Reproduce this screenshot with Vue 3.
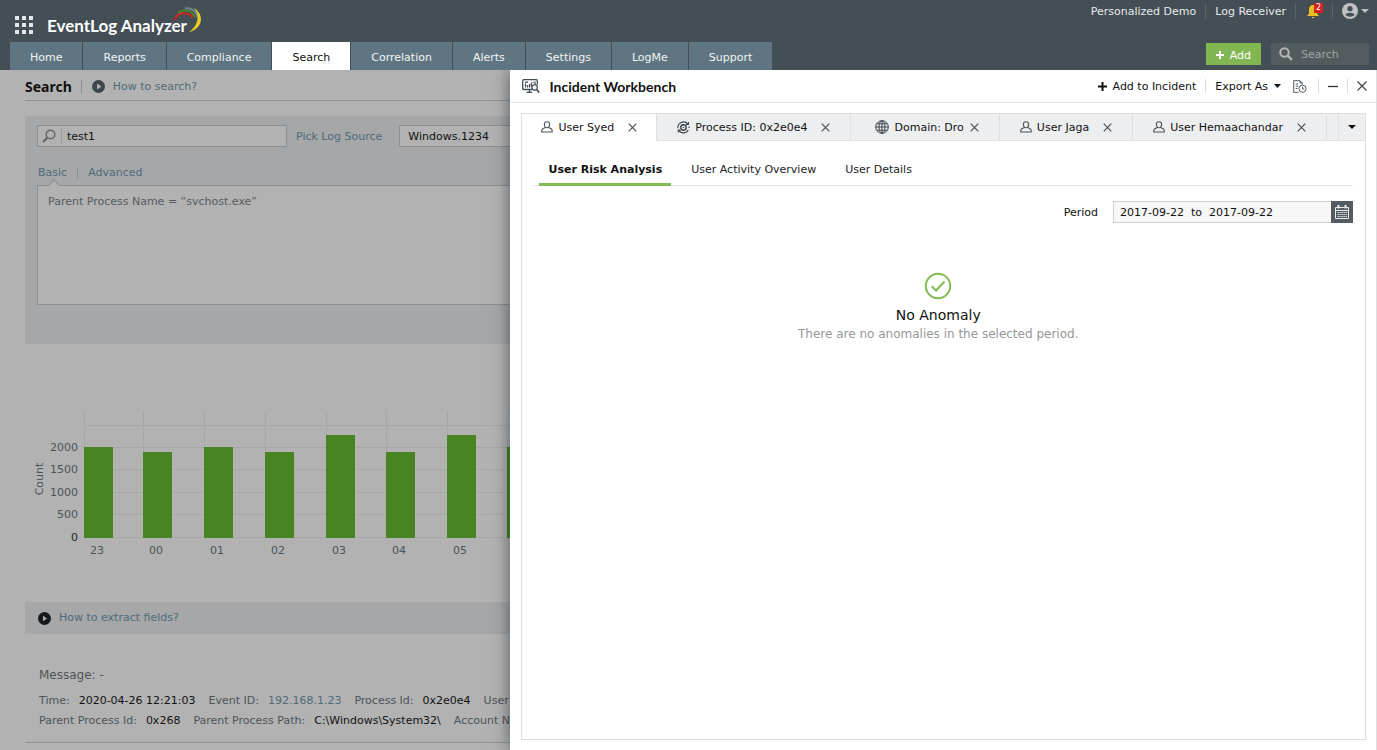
<script setup>
import { ref } from 'vue'

const navItems = ['Home', 'Reports', 'Compliance', 'Search', 'Correlation', 'Alerts', 'Settings', 'LogMe', 'Support']
const activeNav = ref('Search')

const tabs = [
  { icon: 'user', label: 'User Syed' },
  { icon: 'process', label: 'Process ID: 0x2e0e4' },
  { icon: 'globe', label: 'Domain: Dro', tight: true },
  { icon: 'user', label: 'User Jaga' },
  { icon: 'user', label: 'User Hemaachandar' },
]
const activeTab = ref('User Syed')

const views = ['User Risk Analysis', 'User Activity Overview', 'User Details']
const activeView = ref('User Risk Analysis')

const logName = ref('test1')
const source = ref('Windows.1234')
const query = ref('')
const period = ref('2017-09-22  to  2017-09-22')

const bars = [
  { x: 50, top: 37, label: '23' },
  { x: 109, top: 42, label: '00' },
  { x: 170, top: 37, label: '01' },
  { x: 231, top: 42, label: '02' },
  { x: 292, top: 25, label: '03' },
  { x: 352, top: 42, label: '04' },
  { x: 413, top: 25, label: '05' },
  { x: 473, top: 37, label: '06' },
]
const ticks = [
  { y: 38, label: '2000' },
  { y: 60, label: '1500' },
  { y: 83, label: '1000' },
  { y: 105, label: '500' },
  { y: 128, label: '0' },
]

const rows = [
  [
    { k: 'Time:', v: '2020-04-26 12:21:03' },
    { k: 'Event ID:', v: '192.168.1.23', link: true },
    { k: 'Process Id:', v: '0x2e0e4' },
    { k: 'User Name:', v: '-' },
  ],
  [
    { k: 'Parent Process Id:', v: '0x268' },
    { k: 'Parent Process Path:', v: 'C:\\Windows\\System32\\' },
    { k: 'Account Name:', v: '-' },
  ],
]
</script>

<template>
  <div class="page">
    <header class="top">
      <div class="top-row">
        <div class="brand">
          <button class="apps" aria-label="Applications">
            <svg width="19" height="19" viewBox="0 0 19 19" fill="#e4e6e7">
              <template v-for="r in 3" :key="r">
                <rect v-for="c in 3" :key="c" :x="(c - 1) * 7" :y="(r - 1) * 7" width="4" height="4" />
              </template>
            </svg>
          </button>
          <span class="brand-name">EventLog Analyzer</span>
          <svg class="swoosh" width="30" height="28" viewBox="0 0 30 28" fill="none">
            <path d="M2 14C4 6 13 5 20 11" stroke="#d8201c" stroke-width="1.800" />
            <path d="M5 7C11 2.500 18 4 22 11" stroke="#4a8a2a" stroke-width="1.800" />
            <path d="M12 2.500C18 1 23 5 25 12" stroke="#6c8796" stroke-width="2" />
            <path d="M21 2C31 8 31 22 16 26.500C24 20 28 11 21 2Z" fill="#e8cb22" />
          </svg>
        </div>
        <div class="links">
          <a href="#">Personalized Demo</a>
          <i class="bar"></i>
          <a href="#">Log Receiver</a>
          <i class="bar"></i>
          <button class="bell" aria-label="Notifications">
            <svg width="14" height="15" viewBox="0 0 14 15" fill="#e9bf22">
              <path d="M7 1C4 1 3 3.500 3 6V9.500L1 12H13L11 9.500V6C11 3.500 10 1 7 1ZM5.500 13H8.500C8 14.700 6 14.700 5.500 13Z" />
            </svg>
            <span class="badge">2</span>
          </button>
          <i class="bar"></i>
          <button class="account" aria-label="Account">
            <svg width="16" height="16" viewBox="0 0 17 17">
              <circle cx="8.500" cy="8.500" r="8.500" fill="#bfc1c2" />
              <circle cx="8.500" cy="6" r="2.800" fill="#434e55" />
              <path d="M3.500 12.500C4.500 9.500 12.500 9.500 13.500 12.500C11 15.200 6 15.200 3.500 12.500Z" fill="#434e55" />
            </svg>
            <svg width="8" height="4" viewBox="0 0 8 4" fill="#bfc1c2"><path d="M0 0H8L4 4Z" /></svg>
          </button>
        </div>
      </div>
      <div class="top-row second">
        <nav class="nav">
          <a v-for="n in navItems" :key="n" href="#" :class="{ on: n === activeNav }" @click.prevent="activeNav = n">{{ n }}</a>
        </nav>
        <div class="actions">
          <button class="add">
            <svg width="8" height="8" viewBox="0 0 8 8" stroke="#fff" stroke-width="2"><path d="M4 0V8M0 4H8" /></svg>
            <span>Add</span>
          </button>
          <label class="find">
            <svg width="14" height="14" viewBox="0 0 14 14" fill="none" stroke="#b4b6b7">
              <circle cx="5.500" cy="5.500" r="4.200" stroke-width="2" /><path d="M8.700 8.700L13 13" stroke-width="2.400" />
            </svg>
            <input type="text" placeholder="Search" aria-label="Search" />
          </label>
        </div>
      </div>
    </header>

    <main class="main">
      <div class="heading">
        <h1>Search</h1>
        <i class="sep"></i>
        <svg width="13" height="13" viewBox="0 0 13 13"><circle cx="6.500" cy="6.500" r="6.500" fill="#3c474d" /><path d="M5 3.500L9.500 6.500L5 9.500Z" fill="#b2b2b2" /></svg>
        <a href="#">How to search?</a>
      </div>

      <section class="box">
        <div class="box-row">
          <label class="field name">
            <svg width="14" height="14" viewBox="0 0 14 14" fill="none" stroke="#62686b">
              <circle cx="8.500" cy="5.500" r="4.300" stroke-width="1.600" /><path d="M5.400 8.600L1 13" stroke-width="2.200" />
            </svg>
            <i class="sep"></i>
            <input v-model="logName" type="text" aria-label="Log type" />
          </label>
          <a href="#" class="pick">Pick Log Source</a>
          <label class="field source"><input v-model="source" type="text" aria-label="Log source" /></label>
        </div>
        <div class="modes">
          <a href="#" class="basic">Basic</a>
          <i class="sep"></i>
          <a href="#">Advanced</a>
        </div>
        <textarea v-model="query" aria-label="Query" placeholder="Parent Process Name = “svchost.exe”"></textarea>
      </section>

      <svg class="chart" width="520" height="150" viewBox="0 0 520 150" role="img" aria-label="Count per hour">
        <g stroke="#a6a7a8" stroke-width="1">
          <path v-for="b in bars" :key="b.x" :d="`M${b.x + 0.5} 1V128`" />
          <path d="M50 15.500H520" />
          <path v-for="t in ticks" :key="t.y" :d="`M50 ${t.y - 0.5}H520`" />
        </g>
        <rect v-for="b in bars" :key="b.label" :x="b.x" :y="b.top" width="29" :height="128 - b.top" fill="#498423" />
        <g class="axis" text-anchor="end">
          <text v-for="t in ticks" :key="t.label" x="44" :y="t.y + 3" :class="{ zero: t.label === '0' }">{{ t.label }}</text>
        </g>
        <g class="axis" text-anchor="middle">
          <text v-for="b in bars" :key="b.label" :x="b.x + 13" y="144">{{ b.label }}</text>
          <text transform="translate(9 69) rotate(-90)">Count</text>
        </g>
      </svg>

      <div class="extract">
        <svg width="13" height="13" viewBox="0 0 13 13"><circle cx="6.500" cy="6.500" r="6.500" fill="#15191b" /><path d="M5 3.800L9 6.500L5 9.200Z" fill="#b2b2b2" /></svg>
        <a href="#">How to extract fields?</a>
      </div>

      <section class="event">
        <p class="message">Message: -</p>
        <dl v-for="(row, i) in rows" :key="i">
          <div v-for="p in row" :key="p.k">
            <dt>{{ p.k }}</dt>
            <dd><a v-if="p.link" href="#">{{ p.v }}</a><template v-else>{{ p.v }}</template></dd>
          </div>
        </dl>
      </section>
    </main>

    <aside class="bench" aria-label="Incident Workbench">
      <div class="bench-head">
        <svg width="18" height="15" viewBox="0 0 18 15" fill="none" stroke="#434e55">
          <path d="M10 10.500H1.500Q.7 10.500 .7 9.500V1.700Q.7 .7 1.700 .7H14.300Q15.300 .7 15.300 1.700V5.500" stroke-width="1.300" />
          <path d="M3.500 8.500V4.500M5.500 8.500V6M7.500 8.500V5M9.300 8V3.500M3 3.200H6M11 4V3M13 5V2.500" stroke-width="1.200" />
          <path d="M4.500 13.300H10M7.500 10.500V13" stroke-width="1.300" />
          <circle cx="12.600" cy="8.400" r="2.700" stroke-width="1.200" /><path d="M14.600 10.500L17.300 13.600" stroke-width="1.600" />
        </svg>
        <h2>Incident Workbench</h2>
        <button class="act">
          <svg width="9" height="9" viewBox="0 0 9 9" stroke="#111" stroke-width="2"><path d="M4.500 0V9M0 4.500H9" /></svg>
          <span>Add to Incident</span>
        </button>
        <i class="sep"></i>
        <button class="act export">
          <span>Export As</span>
          <svg width="7" height="4" viewBox="0 0 7 4" fill="#111"><path d="M0 0H7L3.500 4Z" /></svg>
        </button>
        <button class="act report" aria-label="Schedule report">
          <svg width="14" height="13" viewBox="0 0 14 13" fill="none" stroke="#555d62">
            <path d="M5.500 12.300H.7V.7H7L9.300 3V4.500M7 .7V3H9.300M2.700 4H5M2.700 6.200H5M2.700 8.500H4.500" /><circle cx="9.500" cy="8.700" r="3.600" /><path d="M9.500 6.700V9H11.400" />
          </svg>
        </button>
        <i class="sep"></i>
        <button class="act" aria-label="Minimize">
          <svg width="10" height="10" viewBox="0 0 10 10" stroke="#333" stroke-width="1.300"><path d="M0 5.500H10" /></svg>
        </button>
        <i class="sep"></i>
        <button class="act" aria-label="Close">
          <svg width="10" height="10" viewBox="0 0 10 10" stroke="#444" stroke-width="1.200"><path d="M.5 .5L9.500 9.500M9.500 .5L.5 9.500" /></svg>
        </button>
      </div>

      <div class="card">
        <div class="tabs">
          <div v-for="t in tabs" :key="t.label" class="tab" :class="{ on: t.label === activeTab, tight: t.tight }">
            <button class="tab-name" @click="activeTab = t.label">
              <svg v-if="t.icon === 'user'" width="12" height="12" viewBox="0 0 12 12" fill="none" stroke="#4a5358" stroke-width="1.100">
                <path d="M6 .7C3.900 .7 3.300 2.200 3.400 3.500C3.500 5.200 4.500 6.700 6 6.700C7.500 6.700 8.500 5.200 8.600 3.500C8.700 2.200 8.100 .7 6 .7ZM4.400 6.500L1.800 7.800Q.7 8.500 .7 11H11.300Q11.300 8.500 10.200 7.800L7.600 6.500" />
              </svg>
              <svg v-else-if="t.icon === 'process'" width="13" height="13" viewBox="0 0 13 13" fill="none" stroke="#3c464c" stroke-width="1.100">
                <path d="M11.300 9A5.500 5.500 0 0 1 1.700 9.200M.9 7.200A5.600 5.600 0 0 1 10.800 3M12.100 5.500V7M11.500 .9V3.400H9M1.300 11.500V9H3.800" />
                <circle cx="6.500" cy="6.500" r="2.700" stroke-width="1.400" /><circle cx="6.500" cy="6.500" r=".7" fill="#3c464c" stroke="none" />
              </svg>
              <svg v-else width="14" height="14" viewBox="0 0 14 14" fill="none" stroke="#3c464c">
                <circle cx="7" cy="7" r="6.300" /><ellipse cx="7" cy="7" rx="3" ry="6.300" /><path d="M7 .7V13.300M.7 7H13.300M1.700 3.800H12.300M1.700 10.200H12.300" />
              </svg>
              <span>{{ t.label }}</span>
            </button>
            <button class="x" :aria-label="`Close ${t.label}`">
              <svg width="9" height="9" viewBox="0 0 9 9" stroke="#444b50" stroke-width="1.100"><path d="M.7 .7L8.300 8.300M8.300 .7L.7 8.300" /></svg>
            </button>
          </div>
          <div class="rest"></div>
          <button class="more" aria-label="More tabs">
            <svg width="8" height="4" viewBox="0 0 8 4" fill="#111"><path d="M0 0H8L4 4Z" /></svg>
          </button>
        </div>

        <nav class="views">
          <a v-for="v in views" :key="v" href="#" :class="{ on: v === activeView }" @click.prevent="activeView = v">{{ v }}</a>
        </nav>

        <div class="period">
          <label for="period">Period</label>
          <input id="period" v-model="period" type="text" />
          <button aria-label="Open calendar">
            <svg width="14" height="14" viewBox="0 0 14 14" fill="none" stroke="#e9ebec">
              <path d="M.5 2.500H13.500V13.500H.5ZM.5 5.500H13.500" /><path d="M3.500 0V3.500M10.500 0V3.500" stroke-width="2" /><path d="M2.500 7.500H12M2.500 9.500H12M2.500 11.500H12" stroke-dasharray="1.300 .7" />
            </svg>
          </button>
        </div>

        <div class="empty">
          <svg width="28" height="28" viewBox="0 0 28 28" fill="none" stroke="#7fba52" stroke-width="2">
            <circle cx="14" cy="14" r="12.200" /><path d="M7.800 14.300L12 18.500L20.500 9.500" />
          </svg>
          <h3>No Anomaly</h3>
          <p>There are no anomalies in the selected period.</p>
        </div>
      </div>
    </aside>
  </div>
</template>

<style>
body {
  margin: 0;
}
</style>

<style scoped>
.page {
  position: relative;
  display: flex;
  flex-direction: column;
  min-height: 100vh;
  overflow: hidden;
  background: #b2b2b2;
  color: #111;
  font: 11px/16px "DejaVu Sans", Verdana, sans-serif;
}
.page * {
  box-sizing: border-box;
}
svg {
  display: block;
  flex: none;
}
a {
  color: #4f6b79;
  text-decoration: none;
}
button {
  display: flex;
  align-items: center;
  margin: 0;
  padding: 0;
  border: 0;
  background: none;
  color: inherit;
  font: inherit;
  white-space: nowrap;
}
button > span {
  padding-top: 2px;
}
input,
textarea {
  min-width: 0;
  margin: 0;
  padding: 0;
  border: 0;
  outline: 0;
  background: none;
  color: #111;
  font: inherit;
}
h1,
h2,
h3,
p,
dl,
dd {
  margin: 0;
}
.sep {
  flex: none;
  width: 1px;
  height: 14px;
  background: #d9dcdd;
}

/* Top bar */
.top {
  position: relative;
  z-index: 2;
  background: #434e55;
}
.top-row {
  display: flex;
  justify-content: space-between;
  height: 42px;
}
.top-row.second {
  height: 28px;
  padding-left: 10px;
}
.brand {
  display: flex;
  align-items: flex-end;
  padding: 0 0 7px 15px;
}
.brand-name {
  margin-left: 13px;
  color: #fff;
  font: bold 17px/19px Lato, sans-serif;
}
.swoosh {
  margin: 0 0 1px -14px;
}
.links {
  display: flex;
  align-items: center;
  height: 22px;
  padding-right: 8px;
}
.links a {
  padding-top: 2px;
  color: #e8eaeb;
}
.bar {
  width: 1px;
  height: 15px;
  margin: 0 9px;
  background: #5a646a;
}
.bell {
  position: relative;
  padding: 0 3px 0 1px;
}
.badge {
  position: absolute;
  top: -1px;
  right: 0;
  width: 9px;
  padding: 0;
  background: #d8201c;
  color: #fff;
  font-size: 8px;
  line-height: 10px;
  text-align: center;
}
.account {
  gap: 3px;
}
.nav {
  display: flex;
}
.nav a {
  padding: 8px 20px 4px;
  border-right: 1px solid #434e55;
  background: #5f7682;
  color: #f1f3f4;
}
.nav a.on {
  background: #fff;
  color: #111;
}
.actions {
  display: flex;
  gap: 10px;
  height: 22px;
  margin: 1px 8px 0 0;
}
.add {
  gap: 6px;
  padding: 1px 10px 0;
  background: #82b653;
  color: #fff;
}
.find {
  display: flex;
  align-items: center;
  gap: 8px;
  width: 98px;
  padding: 0 8px;
  background: #545b5f;
}
.find input {
  width: 60px;
  padding-top: 2px;
  color: #eee;
}
.find input::placeholder {
  color: #a1a5a7;
  opacity: 1;
}

/* Search page */
.main {
  display: flex;
  flex-direction: column;
  padding-left: 25px;
}
.heading {
  display: flex;
  align-items: center;
  gap: 8px;
  height: 31px;
  padding-top: 3px;
  border-bottom: 1px solid #8f9393;
}
.heading h1 {
  font: bold 14px/18px "Noto Sans", sans-serif;
}
.heading .sep,
.modes .sep {
  background: #8b9092;
}
.heading .sep {
  margin: 0 2px 0 1px;
}
.box {
  margin-top: 15px;
  padding: 9px 0 39px 12px;
  background: #a5a7a9;
}
.box-row {
  display: flex;
  align-items: center;
}
.box-row input {
  padding-top: 1px;
}
.field {
  display: flex;
  align-items: center;
  gap: 5px;
  height: 22px;
  padding: 0 4px;
  border: 1px solid #8b8f91;
  background: #b2b2b2;
}
.field .sep {
  background: #999d9f;
}
.field.name {
  width: 250px;
}
.field.name input {
  flex: 1;
}
.field.source {
  flex: 1;
  padding-left: 8px;
}
.pick {
  margin: 0 17px 0 9px;
  padding-top: 2px;
}
.modes {
  display: flex;
  align-items: center;
  gap: 10px;
  margin: 18px 0 4px 1px;
}
.modes .sep {
  height: 12px;
}
.basic {
  position: relative;
}
.basic::after {
  content: "";
  position: absolute;
  left: 12px;
  bottom: -8px;
  width: 7px;
  height: 7px;
  border: solid #8b8f91;
  border-width: 1px 0 0 1px;
  background: #b2b2b2;
  transform: rotate(45deg);
}
textarea {
  display: block;
  width: 100%;
  height: 120px;
  padding: 8px 10px;
  border: 1px solid #8b8f91;
  background: #b2b2b2;
  resize: none;
}
textarea::placeholder {
  color: #565c60;
  opacity: 1;
}
.chart {
  margin: 66px 0 0 9px;
}
.axis text {
  fill: #4c5458;
}
.axis .zero {
  fill: #1c2226;
}
.extract {
  display: flex;
  align-items: center;
  gap: 8px;
  height: 32px;
  margin-top: 42px;
  padding-left: 13px;
  background: #a5a7a9;
}
.event {
  padding: 32px 0 11px 14px;
  border-bottom: 1px solid #8f9393;
  color: #4c5458;
}
.message {
  margin-bottom: 7px;
  font-size: 12px;
  line-height: 18px;
}
dl,
dl div {
  display: flex;
  white-space: nowrap;
}
dl {
  gap: 13px;
  line-height: 20px;
}
dl div {
  gap: 9px;
}
dd {
  color: #111;
}

/* Workbench panel */
.bench {
  position: absolute;
  top: 70px;
  right: 0;
  bottom: 0;
  left: calc(37% + 1px);
  display: flex;
  flex-direction: column;
  border-right: 1px solid #dcdedf;
  background: #fff;
  box-shadow: 0 0 16px rgba(20, 30, 36, 0.6);
}
.bench-head {
  display: flex;
  align-items: center;
  gap: 9px;
  height: 33px;
  padding: 0 9px 0 12px;
  border-bottom: 1px solid #e6e7e8;
}
.bench-head h2 {
  flex: 1;
  padding-top: 2px;
  font: bold 14px/18px Lato, sans-serif;
}
.act {
  gap: 6px;
}
.act.export {
  margin-right: 3px;
}
.act.report {
  margin-right: 2px;
}
.card {
  display: flex;
  flex: 1;
  flex-direction: column;
  margin: 10px 10px 10px 11px;
  border: 1px solid #dcdedf;
}
.tabs {
  display: flex;
  height: 27px;
}
.tab {
  display: flex;
  align-items: center;
  gap: 14px;
  padding: 0 20px;
  border-right: 1px solid #dddfe1;
  border-bottom: 1px solid #dddfe1;
  background: #edeef0;
}
.tab.on {
  padding: 0 19px;
  border-bottom-color: transparent;
  background: #fff;
}
.tab.tight {
  gap: 6px;
  padding: 0 20px 0 24px;
}
.tab-name {
  gap: 5px;
}
.rest {
  flex: 1;
  border-bottom: 1px solid #dddfe1;
  background: #edeef0;
}
.more {
  justify-content: center;
  width: 27px;
  border: solid #dddfe1;
  border-width: 0 0 1px 1px;
  background: #edeef0;
}
.views {
  display: flex;
  gap: 11px;
  margin: 17px 12px 0 11px;
  padding-left: 6px;
  border-bottom: 1px solid #e3e5e6;
}
.views a {
  padding: 4px 9px 5px;
  color: #222;
}
.views a.on {
  margin-bottom: -1px;
  border-bottom: 3px solid #7fba52;
  color: #111;
  font-weight: bold;
}
.period {
  display: flex;
  align-items: center;
  justify-content: flex-end;
  margin: 15px 12px 0 0;
}
.period label {
  padding-top: 2px;
}
.period input {
  width: 218px;
  height: 22px;
  margin-left: 15px;
  padding: 1px 6px 0;
  border: 1px solid #cdd0d2;
  border-right: 0;
  background: #f7f7f8;
}
.period button {
  justify-content: center;
  width: 22px;
  height: 22px;
  background: #535c62;
}
.empty {
  display: flex;
  flex-direction: column;
  align-items: center;
  margin: 49px 11px 0 0;
  text-align: center;
}
.empty h3 {
  margin-top: 5px;
  font-size: 14px;
  font-weight: normal;
  line-height: 20px;
}
.empty p {
  color: #959899;
  font-size: 12px;
  line-height: 18px;
}
</style>
